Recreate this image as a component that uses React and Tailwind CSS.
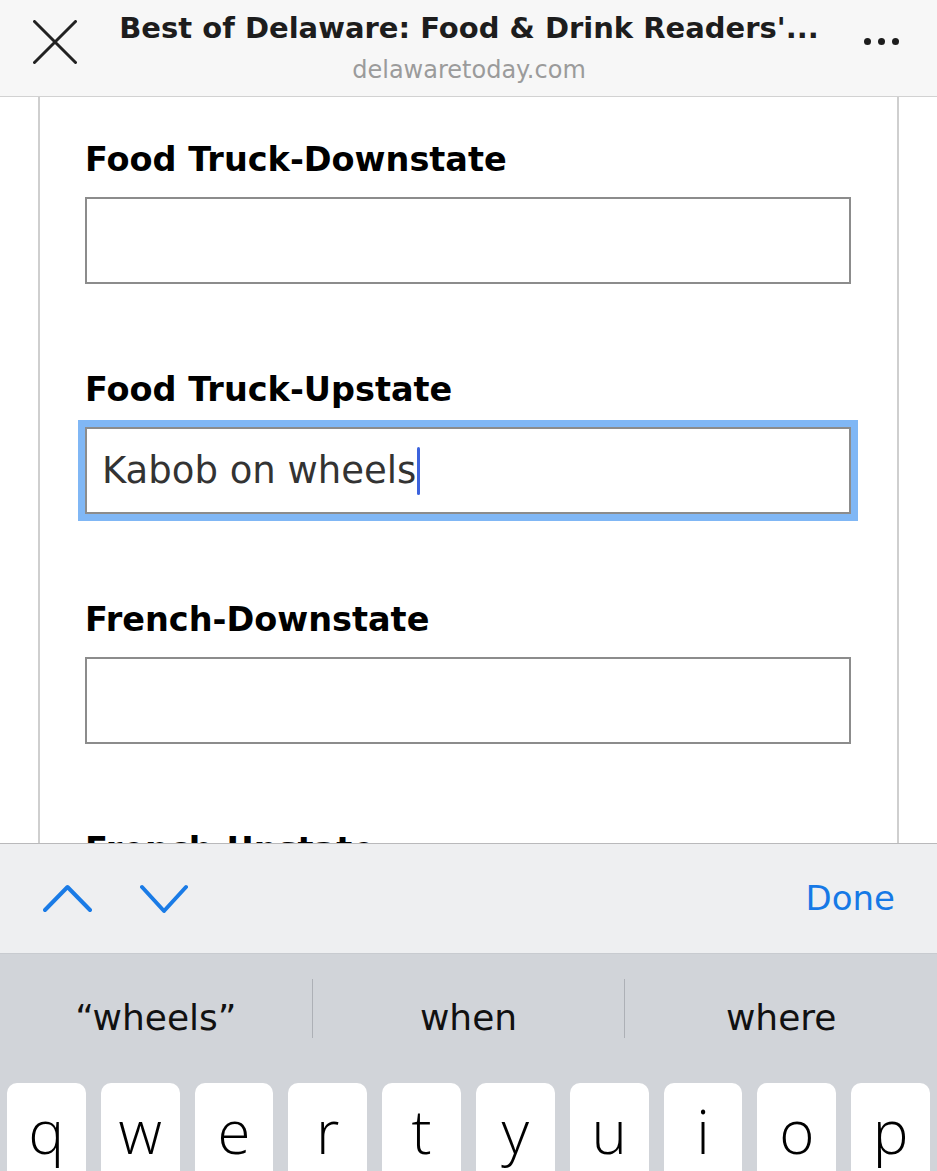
import React from 'react'

const sans = "font-['DejaVu_Sans',sans-serif]"

function FieldLabel({ children, first }) {
  return (
    <p className={`${sans} ${first ? 'mt-[43px]' : 'mt-[86px]'} text-[33.5px] leading-[40px] font-bold text-black whitespace-nowrap`}>
      {children}
    </p>
  )
}

function EmptyInput() {
  return <div className="mt-[17px] w-[766px] h-[87px] flex-shrink-0 border-2 border-[#8c8c8c] bg-white" />
}

export default function App() {
  const keys = ['q', 'w', 'e', 'r', 't', 'y', 'u', 'i', 'o', 'p']

  return (
    <div className="w-[937px] h-[1171px] overflow-hidden flex flex-col bg-white">
      {/* Barra superior */}
      <div className="h-[97px] flex-shrink-0 flex bg-[#f7f7f7] border-b border-[#d2d2d2]">
        <div className="w-[108px] pl-[33px] pt-[20px]">
          <svg width="44" height="44" viewBox="0 0 44 44" fill="none" stroke="#222" strokeWidth="3" strokeLinecap="round">
            <path d="M1.5 1.5 L42.5 42.5 M42.5 1.5 L1.5 42.5" />
          </svg>
        </div>
        <div className={`${sans} flex-1 flex flex-col items-center min-w-0`}>
          <p className="pt-[10px] text-[29px] leading-[36px] font-bold text-[#1d1d1d] whitespace-nowrap">
            Best of Delaware: Food &amp; Drink Readers'...
          </p>
          <p className="mt-[10px] text-[24px] leading-[28px] text-[#9b9b9b] whitespace-nowrap">delawaretoday.com</p>
        </div>
        <div className="w-[107px] flex items-start pt-[38px] pl-[34px] gap-[7px]">
          <span className="w-[7px] h-[7px] rounded-full bg-[#1d1d1d]" />
          <span className="w-[7px] h-[7px] rounded-full bg-[#1d1d1d]" />
          <span className="w-[7px] h-[7px] rounded-full bg-[#1d1d1d]" />
        </div>
      </div>

      {/* Formulario */}
      <div className="h-[746px] flex-shrink-0 overflow-hidden">
        <div className="ml-[38px] w-[861px] h-full flex flex-col items-start border-x-2 border-[#cfcfcf] pl-[45px]">
          <FieldLabel first>Food Truck-Downstate</FieldLabel>
          <EmptyInput />

          <FieldLabel>Food Truck-Upstate</FieldLabel>
          <div className="mt-[17px] w-[766px] h-[87px] flex-shrink-0 border-2 border-[#8c8c8c] bg-white ring-[7px] ring-[#80b7f5] flex items-center pl-[15px]">
            <span className={`${sans} text-[37px] text-[#333] whitespace-nowrap`}>Kabob on wheels</span>
            <span className="ml-[1px] w-[3px] h-[48px] rounded-full bg-[#3c63dd]" />
          </div>

          <FieldLabel>French-Downstate</FieldLabel>
          <EmptyInput />

          <FieldLabel>French-Upstate</FieldLabel>
          <EmptyInput />
        </div>
      </div>

      {/* Barra de accesorios */}
      <div className="h-[110px] flex-shrink-0 flex items-center bg-[#eeeff1] border-t border-[#b9b9bb]">
        <svg className="ml-[43px]" width="50" height="30" viewBox="0 0 50 30" fill="none" stroke="#1a7be6" strokeWidth="4" strokeLinecap="round" strokeLinejoin="round">
          <path d="M2 26 L24.5 3 L47 26" />
        </svg>
        <svg className="ml-[47px]" width="50" height="30" viewBox="0 0 50 30" fill="none" stroke="#1a7be6" strokeWidth="4" strokeLinecap="round" strokeLinejoin="round">
          <path d="M2 3 L24 27 L46 3" />
        </svg>
        <span className={`${sans} ml-auto mr-[42px] text-[34px] text-[#1679e6]`}>Done</span>
      </div>

      {/* Teclado */}
      <div className="flex-1 overflow-hidden bg-[#d1d4d9] border-t border-[#c8cbd0]">
        <div className="mt-[25px] flex items-start">
          {['\u201Cwheels\u201D', 'when', 'where'].map((word, i) => (
            <React.Fragment key={word}>
              {i > 0 && <div className="w-px h-[59px] bg-[#adb0b6]" />}
              <div className={`${sans} flex-1 h-[59px] pt-[18px] leading-[41px] text-[36px] text-[#111] text-center`}>
                {word}
              </div>
            </React.Fragment>
          ))}
        </div>
        <div className="mt-[45px] px-[7px] flex gap-[15px]">
          {keys.map((k) => (
            <div key={k} className="flex-1 h-[110px] rounded-[10px] bg-white flex justify-center">
              <span className="pt-[9px] font-['Open_Sans',sans-serif] font-light text-[60px] leading-[79px] text-black">{k}</span>
            </div>
          ))}
        </div>
      </div>
    </div>
  )
}
